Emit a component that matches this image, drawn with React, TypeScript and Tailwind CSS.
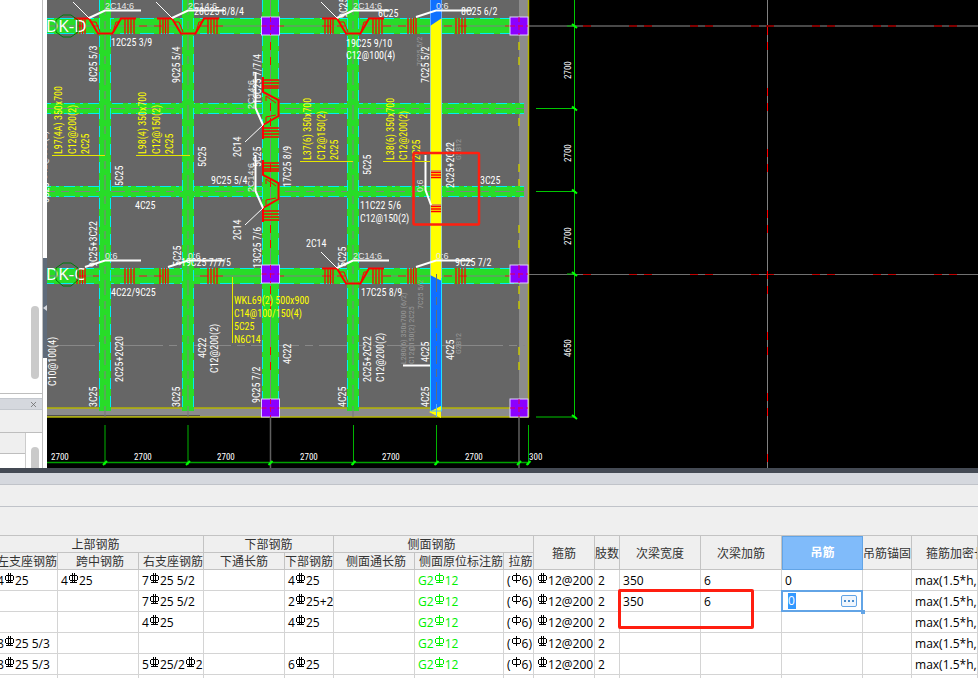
import { X } from "lucide-react";

const GREEN = "#28dc28";
const CYAN = "#00f0f0";
const RED = "#ff0000";

// Axis line types repeat every 61 units: two short red dashes, one long gap.
const AXIS_DASH = "8 7 8 38";

type Label = [x: number, y: number, text: string];

const flat: Label[] = [
  [194, 15, "28C25 8/8/4"],
  [111, 46, "12C25 3/9"],
  [378, 17, "6C25"],
  [461, 15, "8C25 6/2"],
  [346, 47, "19C25 9/10"],
  [346, 59, "C12@100(4)"],
  [211, 184, "9C25 5/4"],
  [135, 209, "4C25"],
  [480, 184, "3C25"],
  [360, 209, "11C22 5/6"],
  [360, 222, "C12@150(2)"],
  [306, 247, "2C14"],
  [181, 266, "19C25 7/7/5"],
  [111, 296, "4C22/9C25"],
  [361, 296, "17C25 8/9"],
  [455, 266, "9C25 7/2"],
];

const upright: Label[] = [
  [47, 180, "C12@150(2)"],
  [49, 203, "5C25"],
  [97, 82, "8C25 5/3"],
  [180, 83, "9C25 5/4"],
  [206, 167, "5C25"],
  [123, 186, "5C25"],
  [261, 104, "16C25 7/7/4"],
  [261, 167, "5C25"],
  [241, 157, "2C14"],
  [241, 240, "2C14"],
  [291, 187, "17C25 8/9"],
  [371, 175, "5C25"],
  [347, 18, "9C25"],
  [429, 83, "7C25 5/2"],
  [454, 188, "2C25+2C22"],
  [261, 268, "13C25 7/6"],
  [97, 267, "9C25+3C22"],
  [181, 266, "5C25"],
  [346, 267, "5C25"],
  [260, 403, "9C25 7/2"],
  [56, 386, "C10@100(4)"],
  [123, 382, "2C25+2C20"],
  [206, 358, "4C22"],
  [218, 373, "C12@200(2)"],
  [97, 407, "3C25"],
  [180, 407, "3C25"],
  [291, 364, "4C22"],
  [371, 382, "2C25+2C22"],
  [384, 382, "C12@200(2)"],
  [346, 407, "4C25"],
  [429, 362, "4C25"],
  [429, 407, "4C25"],
  [454, 360, "4C25"],
];

const ghost: Label[] = [
  [422, 66, "7C25 5/2"],
  [461, 160, "G2B12"],
  [451, 160, "2C22"],
  [406, 364, "L280(6) 350x700 (6/2)"],
  [414, 364, "C12@150(2) 2C25"],
  [423, 309, "7C25 5/2"],
  [461, 354, "G2B12"],
];

const beamMarks: Label[] = [
  [62, 154, "L97(4A) 350x700"],
  [76, 154, "C12@200(2)"],
  [89, 154, "2C25"],
  [146, 154, "L98(4) 350x700"],
  [160, 154, "C12@150(2)"],
  [173, 154, "2C25"],
  [311, 160, "L37(6) 350x700"],
  [325, 160, "C12@150(2)"],
  [338, 160, "2C25"],
  [394, 160, "L38(6) 350x700"],
  [407, 160, "C12@200(2)"],
  [420, 160, "2C25"],
];

const frameMark: Label[] = [
  [234, 304, "WKL69(2) 500x900"],
  [234, 317, "C14@100/150(4)"],
  [234, 330, "5C25"],
  [234, 343, "N6C14"],
];

function Labels({ items, fill, vertical = false, className = "text-[10px]" }: {
  items: Label[];
  fill: string;
  vertical?: boolean;
  className?: string;
}) {
  return (
    <g fill={fill} className={className} fontFamily="'Roboto Condensed', 'Liberation Sans', sans-serif">
      {items.map(([x, y, text], i) => (
        <text key={i} transform={`translate(${x} ${y})${vertical ? " rotate(-90)" : ""}`}>
          {text}
        </text>
      ))}
    </g>
  );
}

function BeamH({ y, h, end, main = false }: { y: number; h: number; end: number; main?: boolean }) {
  const mid = y + Math.floor(h / 2) + (main ? 0 : 0.5);
  return (
    <g>
      <rect x={40} y={y} width={end - 40} height={h} fill={GREEN} />
      <path d={`M40 ${y + 0.5}H${end}M40 ${y + h - 0.5}H${end}`} stroke={CYAN} strokeDasharray={main ? "14 6" : "11 5 3 5"} />
      <path d={`M40 ${mid}H${end}`} stroke="#808080" strokeDasharray={main ? undefined : "15 6 8 6"} />
      {main && <path d={`M78 ${mid}H${end}`} stroke="#e02010" strokeDasharray={AXIS_DASH} />}
    </g>
  );
}

function BeamV({ x, w, main = false }: { x: number; w: number; main?: boolean }) {
  const mid = x + w / 2;
  return (
    <g>
      <rect x={x} y={0} width={w} height={411} fill={GREEN} />
      <path d={`M${x + 0.5} 0V408M${x + w - 0.5} 0V408`} stroke={CYAN} strokeDasharray={main ? "12 5" : "11 7"} />
      <path d={`M${mid} 0V411`} stroke="#808080" strokeDasharray={main ? undefined : "15 6 8 6"} />
      {main && <path d={`M${mid} 42V408`} stroke={RED} strokeDasharray={AXIS_DASH} />}
    </g>
  );
}

// Additional stirrups on both sides of a crossing, with the hanger bar when there is one.
function Node({ x, y, hanger = false }: { x: number; y: number; hanger?: boolean }) {
  return (
    <g transform={`translate(${x} ${y})`} fill="none">
      <path d="M-28 0V16M-25 0V16M-22.5 0V16M-20 0V16M20 0V16M23 0V16M26 0V16M29 0V16" stroke={RED} strokeWidth={1.3} />
      {hanger && (
        <>
          <path d="M-31 .5H-16L-7 15.5H7.5L16 .5H31" stroke={RED} strokeWidth={2} />
          <path d="M-13 4H-9L-5 14M8 14L11 4H14" stroke={RED} />
          <path d="M-32-16L-16 0" stroke="#fff" />
        </>
      )}
      <path d={hanger ? "M-16 0L0-7.5H36" : "M-20-1L0-7.5H36"} stroke="#fff" strokeWidth={2} />
      <text x={0} y={-9} fill="#e8e8e8" className="font-['Liberation_Sans',sans-serif] text-[9px]">
        {hanger ? "2C14;6" : "0;6"}
      </text>
    </g>
  );
}

function NodeV({ y }: { y: number }) {
  return (
    <g transform={`translate(263 ${y})`} fill="none">
      <path d="M0-28H16M0-25H16M0-22H16M0-20H16M0 20H16M0 23H16M0 26H16M0 29H16" stroke={RED} strokeWidth={1.3} />
      <path d="M0-31V-16L15.5-8V8L0 17V31" stroke={RED} strokeWidth={2} />
      <path d="M3-7V-12L13-5M3 14V9L13 7" stroke={RED} />
      <path d="M0 17L-18 34" stroke="#fff" />
      <path d="M0 17L-7.5 0V-36" stroke="#fff" strokeWidth={2} />
      <text transform="translate(-9 1) rotate(-90)" fill="#e8e8e8" className="font-['Liberation_Sans',sans-serif] text-[9px]">
        2C14;6
      </text>
    </g>
  );
}

function Column({ x, y }: { x: number; y: number }) {
  return (
    <g>
      <rect x={x - 9} y={y - 9} width={18} height={18} fill="#8c00ff" stroke="#dcd0ff" />
      <path d={`M${x - 9} ${y}H${x + 9}M${x} ${y - 9}V${y + 9}`} stroke="#e00050" strokeDasharray="5 3" />
    </g>
  );
}

function Dimensions() {
  const xs = [105, 188, 270.5, 353.5, 436.5, 519, 528.5];
  const ys = [26, 108.5, 191.5, 274, 417];
  return (
    <g>
      <path d="M574.5 0V417M536 108.5H576M536 191.5H576M536 417H576M567 26H575M567 274H575" stroke="#00c800" />
      <path d="M40 462.5H530" stroke="#00a000" strokeWidth={1.5} />
      <path d="M105 425V465M188 425V465M353.5 425V465M436.5 425V465M528.5 425V465" stroke="#00b400" />
      <path d="M270.5 417V468M519 417V468" stroke="#606060" strokeWidth={1.5} />
      <g stroke="#00ff00" strokeWidth={2}>
        {xs.map((x) => <path key={x} d={`M${x - 2} 465L${x + 2} 461`} />)}
        {ys.map((y) => <path key={y} d={`M572 ${y - 2}L577 ${y + 2}`} />)}
      </g>
      <Labels
        items={[
          [51, 460, "2700"],
          [134, 460, "2700"],
          [217, 460, "2700"],
          [300, 460, "2700"],
          [382, 460, "2700"],
          [465, 460, "2700"],
          [529, 460, "300"],
        ]}
        fill="#fff"
        className="text-[9px]"
      />
      <Labels
        items={[[571, 79, "2700"], [571, 162, "2700"], [571, 245, "2700"], [571, 357, "4650"]]}
        fill="#fff"
        vertical
        className="text-[9px]"
      />
    </g>
  );
}

function Drawing() {
  return (
    <svg className="block h-[468px] w-full bg-black" role="img" aria-label="梁平法施工图">
      <g transform="translate(-47 0)">
        <path d="M528 26H3000" stroke="#484848" strokeWidth={2} />
        <path d="M528 274.5H3000" stroke="#707070" />
        <path d="M767.5 0V468" stroke="#808080" />
        <path d="M583 26H3000" stroke="#800000" strokeWidth={2} strokeDasharray="8 38 8 7" />
        <path d="M583 274.5H3000" stroke="#c00000" strokeDasharray="8 38 8 7" />
        <path d="M767.5 27V468" stroke={RED} strokeDasharray={AXIS_DASH} />

        <rect x={40} y={0} width={489} height={417} fill="#666" />
        <path d="M40 412.5H524M523.5 0V417" stroke="#8c8c8c" strokeWidth={9} />
        <path d="M40 408H519M40 417H529M528.5 0V417" stroke="#b4b400" strokeWidth={1.5} fill="none" />
        <path d="M47 415.5H200" stroke="#505050" />
        <path d="M519 42V408" stroke="#c8c800" strokeWidth={1.5} strokeDasharray={AXIS_DASH} />
        <path d="M47 345.5H525" stroke="#888" strokeDasharray="48 6 8 6" />

        <BeamH y={103} h={11} end={524} />
        <BeamH y={186} h={11} end={524} />
        <BeamH y={18} h={16} end={519} main />
        <BeamH y={268} h={16} end={519} main />
        <BeamV x={99} w={12} />
        <BeamV x={182} w={12} />
        <BeamV x={262} w={17} main />
        <BeamV x={347} w={12} />
        <path d="M105 411V417M188 411V417M353 411V417" stroke="#777" />

        <rect x={430} y={0} width={12} height={411} fill="#1070ff" />
        <path d="M430 26L442 18V281L430 275Z" fill="#ff0" />
        <path d="M430.5 0V411M441.5 0V411" stroke="#80c0ff" opacity={0.7} />
        <path d="M430.5 278V411M441.5 278V411" stroke="#20e0ff" />
        <path d="M436.5 274V417" stroke="#60707c" strokeDasharray="18 5 8 5" />
        <path d="M429 412L441 406V418Z" fill="#ff0" />
        <path d="M431 411H442M436.5 404V417" stroke="#50b0ff" />

        <Node x={105} y={18} hanger />
        <Node x={188} y={18} hanger />
        <Node x={353} y={18} hanger />
        <Node x={436} y={18} />
        <Node x={105} y={268} />
        <Node x={188} y={268} />
        <Node x={353} y={268} hanger />
        <Node x={436} y={268} />
        <NodeV y={108} />
        <NodeV y={191} />

        <g fill="#fff" className="font-['Open_Sans',sans-serif] text-[17px]">
          <text x={46} y={32}>DK-D</text>
          <text x={46} y={280}>DK-C</text>
        </g>
        <g fill="none" stroke="#00780a">
          <path d="M63 15L71 15L78 20V32L71 37H63L56 32V20Z" />
          <path d="M63 263L71 263L78 268V280L71 286H63L56 280V268Z" />
        </g>

        <path d="M431 172.5H441M431 175H441M431 177.5H441M431 206.5H441M431 209H441M431 211.5H441" stroke={RED} strokeWidth={1.5} />
        <path d="M431 171H441M431 205H441" stroke="#c04090" />
        <path d="M431 205L425.5 190V155" stroke="#fff" strokeWidth={2} fill="none" />
        <text transform="translate(423 192) rotate(-90)" fill="#ddd" className="font-['Liberation_Sans',sans-serif] text-[9px]">0;6</text>

        <Column x={270.5} y={26} />
        <Column x={519} y={26} />
        <Column x={270.5} y={274} />
        <Column x={519} y={274} />
        <Column x={270.5} y={408} />
        <Column x={519} y={408} />

        <Labels items={ghost} fill="#999" vertical className="text-[8px]" />
        <Labels items={flat} fill="#fff" />
        <Labels items={upright} fill="#fff" vertical />
        <Labels items={beamMarks} fill="#ff0" vertical />
        <Labels items={frameMark} fill="#ff0" />
        <path d="M52 155.5H105M136 155.5H190M300 161.5H353M383 161.5H430M232.5 277V343" stroke="#e6e600" />
        <path d="M403 365.5H430" stroke="#fff" strokeWidth={2} />

        <Dimensions />
        <rect x={413.5} y={153} width={65.5} height={71.5} rx={1} fill="none" stroke="#ff2010" strokeWidth={2.5} />
      </g>
    </svg>
  );
}

function SidePanel() {
  return (
    <aside className="flex w-[47px] shrink-0 bg-white">
      <div className="flex w-[43px] flex-col border-r border-[#bebebe]">
        <div className="flex h-[394px] items-end justify-end border-b border-[#bebebe] pr-[3px] pb-3.5">
          <div className="h-[73px] w-2 rounded-full bg-[#cacaca]" />
        </div>
        <div className="mt-1 flex h-3 items-center justify-end border-y border-[#c4c8ce] bg-[#d5d8de] pr-1">
          <button aria-label="关闭" className="text-[#666]">
            <X size={9} />
          </button>
        </div>
        <div className="h-[23px] border-b border-[#bebebe] bg-[#efefef]" />
        <div className="flex flex-1 justify-between">
          <div className="w-[26px] border-r border-[#ccc]">
            <div className="h-[21px] border-b border-[#bebebe] bg-[#efefef]" />
          </div>
          <div className="mt-3.5 mr-[3px] w-2 rounded-t-full bg-[#cacaca]" />
        </div>
      </div>
      <button aria-label="折叠面板" className="mt-[258px] flex h-[100px] w-1 items-center bg-[#5f6b7a]">
        <svg viewBox="0 0 4 6" className="h-1.5 w-1 fill-[#d5d8de]">
          <path d="M4 0V6L0 3Z" />
        </svg>
      </button>
    </aside>
  );
}

// Steel grade signs: ~ HPB300, % HRB335, # HRB400
function Rebar({ text }: { text: string }) {
  return (
    <>
      {text.split(/([~%#])/).map((part, i) => {
        if (!"~%#".includes(part) || part === "") return part;
        return (
          <svg key={i} viewBox="0 0 11 11" shapeRendering="crispEdges" className="inline h-[11px] w-[11px] align-[1px]" fill="none" stroke="currentColor">
            <path d="M2 2.5H9M2 7.5H9M1.5 3V7M9.5 3V7" />
            {part === "#" ? <path d="M4.5 0V10M6.5 0V10" /> : <path d="M5.5 0V10" />}
            {part !== "~" && <path d="M2 9.5H9" />}
          </svg>
        );
      })}
    </>
  );
}

const rows = [
  ["4#25", "4#25", "7#25 5/2", "", "4#25", "", "G2%12", "(~6)", "#12@200", "2", "350", "6", "0", "", "max(1.5*h,5"],
  ["", "", "7#25 5/2", "", "2#25+2", "", "G2%12", "(~6)", "#12@200", "2", "350", "6", "0", "", "max(1.5*h,5"],
  ["", "", "4#25", "", "4#25", "", "G2%12", "(~6)", "#12@200", "2", "", "", "", "", "max(1.5*h,5"],
  ["8#25 5/3", "", "", "", "", "", "G2%12", "(~6)", "#12@200", "2", "", "", "", "", "max(1.5*h,5"],
  ["8#25 5/3", "", "5#25/2#2", "", "6#25", "", "G2%12", "(~6)", "#12@200", "2", "", "", "", "", "max(1.5*h,5"],
  ["", "", "", "", "", "", "", "", "", "", "", "", "", "", ""],
];

const th = "overflow-hidden border-r border-b border-[#c3c3c3] px-0 pt-px pb-0 leading-[15px] font-normal whitespace-nowrap";
const td = "border-r border-b border-[#d4d4d4] pt-px pr-0 pb-0 whitespace-nowrap";

function Cell({ row, col, text }: { row: number; col: number; text: string }) {
  if (row === 1 && col === 12) {
    return (
      <td className="relative border-r border-b border-[#d4d4d4] p-0">
        <div className="absolute -inset-px flex items-center justify-between border-2 border-[#62a4e6] bg-white pr-1 pl-[5px]">
          <input aria-label="吊筋" defaultValue={text} className="h-4 w-2 bg-[#3399ff] text-white outline-none" />
          <button aria-label="更多" className="flex h-3 w-4 items-center justify-center gap-0.5 rounded-xs border border-[#62a4e6] bg-[#f0f6fd]">
            <span className="size-0.5 bg-[#4a8ccc]" />
            <span className="size-0.5 bg-[#4a8ccc]" />
            <span className="size-0.5 bg-[#4a8ccc]" />
          </button>
          <span className="absolute -right-1 -bottom-1 size-1 bg-[#62a4e6]" />
        </div>
      </td>
    );
  }
  if (row === 1 && col === 10) {
    return (
      <td className={`${td} relative pl-[3px]`}>
        {text}
        <div className="pointer-events-none absolute -top-0.5 -left-0.5 h-10 w-[136px] rounded-xs border-3 border-[#ff1e10]" />
      </td>
    );
  }
  return (
    <td className={`${td} overflow-hidden pl-[3px] ${col === 6 ? "text-[#00f000]" : ""}`}>
      <div className={col === 0 ? "-ml-1.5" : ""}>
        <Rebar text={text} />
      </div>
    </td>
  );
}

function BarTable() {
  return (
    <table className="w-full table-fixed border-separate border-spacing-0 border-t border-[#c3c3c3] bg-white text-xs leading-[18px] text-black">
      <colgroup>
        <col className="w-[58px]" />
        <col className="w-[81px]" />
        <col className="w-[65px]" />
        <col className="w-[81px]" />
        <col className="w-[49px]" />
        <col className="w-[81px]" />
        <col className="w-[89px]" />
        <col className="w-[30px]" />
        <col className="w-[61px]" />
        <col className="w-[25px]" />
        <col className="w-[81px]" />
        <col className="w-[81px]" />
        <col className="w-[81px]" />
        <col className="w-[49px]" />
        <col />
      </colgroup>
      <thead className="bg-[#efefef] text-[#333]">
        <tr className="h-[17px]">
          <th colSpan={3} className={`${th} pr-3`}>上部钢筋</th>
          <th colSpan={2} className={th}>下部钢筋</th>
          <th colSpan={3} className={`${th} pr-1`}>侧面钢筋</th>
          <th rowSpan={2} className={th}>箍筋</th>
          <th rowSpan={2} className={th}>肢数</th>
          <th rowSpan={2} className={th}>次梁宽度</th>
          <th rowSpan={2} className={th}>次梁加筋</th>
          <th rowSpan={2} className="border border-[#62a4e6] bg-[#80bbfa] p-0 font-bold text-white">吊筋</th>
          <th rowSpan={2} className={th}>吊筋锚固</th>
          <th rowSpan={2} className={th}>
            <div className="pl-3.5 text-left">箍筋加密长</div>
          </th>
        </tr>
        <tr className="h-[17px]">
          <th className={th}>
            <div className="flex justify-end">左支座钢筋</div>
          </th>
          <th className={`${th} pl-1`}>跨中钢筋</th>
          <th className={`${th} pl-1`}>右支座钢筋</th>
          <th className={th}>下通长筋</th>
          <th className={th}>下部钢筋</th>
          <th className={`${th} pl-1`}>侧面通长筋</th>
          <th className={`${th} pl-1`}>侧面原位标注筋</th>
          <th className={`${th} pl-1`}>拉筋</th>
        </tr>
      </thead>
      <tbody>
        {rows.map((row, r) => (
          <tr key={r} className="h-[21px]">
            {row.map((text, c) => <Cell key={c} row={r} col={c} text={text} />)}
          </tr>
        ))}
      </tbody>
    </table>
  );
}

export default function App() {
  return (
    <div className="flex h-screen flex-col overflow-hidden bg-white font-['Open_Sans','Noto_Sans_CJK_SC',sans-serif]">
      <div className="flex shrink-0">
        <SidePanel />
        <main className="min-w-0 flex-1">
          <Drawing />
        </main>
      </div>
      <div className="h-[5px] shrink-0 bg-[#444a54]" />
      <div className="h-3 shrink-0 border-b border-[#c0c3c9] bg-[#d5d8de]" />
      <div className="h-[22px] shrink-0 border-b border-[#c0c3c9] bg-[#efefef]" />
      <div className="h-7 shrink-0 bg-[#efefef]" />
      <section className="min-h-0 flex-1 overflow-hidden">
        <BarTable />
      </section>
    </div>
  );
}
